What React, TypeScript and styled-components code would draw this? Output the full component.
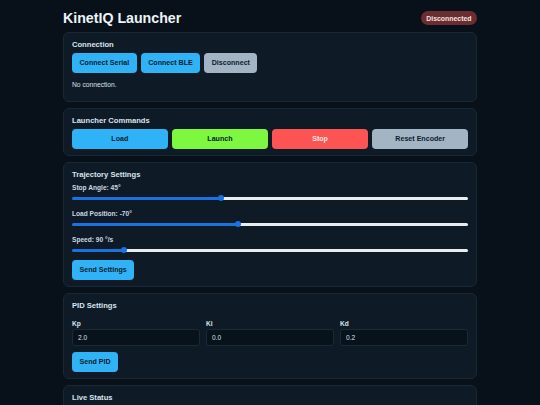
import React, { useState } from 'react';
import styled, { createGlobalStyle } from 'styled-components';

const GlobalStyle = createGlobalStyle`
  html, body {
    margin: 0;
    padding: 0;
    background: #08111a;
    color: #d6e0ea;
    font-family: "Liberation Sans", Arial, sans-serif;
  }
  * { box-sizing: border-box; }
`;

const Page = styled.div`
  width: 414px;
  margin: 0 auto;
  padding: 8px 0 20px;
`;

const Header = styled.header`
  display: flex;
  align-items: center;
  justify-content: space-between;
  height: 20px;
  margin-bottom: 4px;
`;

const Title = styled.h1`
  margin: 0;
  font-size: 14.2px;
  line-height: 20px;
  font-weight: 700;
  color: #eef3f8;
`;

const Badge = styled.span<{ $online: boolean }>`
  display: inline-flex;
  align-items: center;
  height: 14px;
  padding: 0 5.5px;
  border-radius: 7px;
  font-size: 6.9px;
  font-weight: 700;
  color: #f3e4e4;
  background: ${({ $online }) => ($online ? '#2b6b3c' : '#6b2d2f')};
`;

const Card = styled.section`
  background: #0e1b27;
  border: 1px solid #192835;
  border-radius: 6px;
  padding: 6px 8px;
  margin-bottom: 6px;
  font-size: 7px;
  line-height: 9px;
`;

const CardTitle = styled.h2`
  margin: 1px 0 3px;
  font-size: 7.6px;
  line-height: 10px;
  font-weight: 700;
  color: #d9e3ed;
`;

const ButtonRow = styled.div`
  display: flex;
  gap: 4px;
`;

const CommandGrid = styled.div`
  display: grid;
  grid-template-columns: repeat(4, 1fr);
  gap: 4.5px;
`;

const tones = {
  blue: '#2fb2f6',
  green: '#7df73f',
  red: '#fb5452',
  grey: '#a3b4c4',
};

const Button = styled.button<{ $tone: keyof typeof tones }>`
  display: block;
  height: 20px;
  padding: 0 7.5px;
  border: none;
  border-radius: 4px;
  background: ${({ $tone }) => tones[$tone]};
  color: ${({ $tone }) => ($tone === 'red' ? '#fde9e9' : '#0c1c2c')};
  font-family: inherit;
  font-size: 7.1px;
  font-weight: 700;
  cursor: pointer;
`;

const StatusText = styled.p`
  margin: 7px 0 6px;
  font-size: 6.7px;
  line-height: 9px;
  color: #d6e0ea;
`;

const Field = styled.div`
  margin-bottom: 7px;

  &:last-of-type {
    margin-bottom: 6px;
  }
`;

const FieldLabel = styled.label`
  display: block;
  padding-top: 1px;
  margin-bottom: 2px;
  font-size: 6.6px;
  line-height: 8px;
  font-weight: 700;
  color: #ccd7e2;
`;

const Range = styled.input`
  display: block;
  width: 100%;
  height: 8px;
  margin: 0;
  -webkit-appearance: none;
  appearance: none;
  background: transparent;

  &::-webkit-slider-runnable-track {
    height: 3px;
    border-radius: 2px;
    background: var(--track);
  }

  &::-webkit-slider-thumb {
    -webkit-appearance: none;
    width: 6px;
    height: 6px;
    margin-top: -1.5px;
    border-radius: 50%;
    background: #1a72de;
    border: none;
  }
`;

const PidGrid = styled.div`
  display: grid;
  grid-template-columns: repeat(3, 1fr);
  gap: 6px;
  margin: 9px 0 6px;
`;

const PidLabel = styled.label`
  display: block;
  margin-bottom: 1px;
  font-size: 6.6px;
  line-height: 8px;
  font-weight: 700;
  color: #dbe4ee;
`;

const TextInput = styled.input`
  display: block;
  width: 100%;
  height: 17px;
  padding: 0 5px;
  border: 1px solid #1b2a37;
  border-radius: 3px;
  background: #08121b;
  color: #d6e0ea;
  font-family: inherit;
  font-size: 6.6px;
  outline: none;
`;

const StatusBody = styled.div`
  height: 40px;
`;

type SliderProps = {
  label: string;
  unit: string;
  min: number;
  max: number;
  value: number;
  onChange: (v: number) => void;
};

const Slider = ({ label, unit, min, max, value, onChange }: SliderProps) => {
  const pct = ((value - min) / (max - min)) * 100;
  return (
    <Field>
      <FieldLabel>
        {label}: {value}
        {unit}
      </FieldLabel>
      <Range
        type="range"
        min={min}
        max={max}
        value={value}
        onChange={(e) => onChange(Number(e.target.value))}
        style={{
          ['--track' as string]: `linear-gradient(to right, #1a72de ${pct}%, #e9edf1 ${pct}%)`,
        }}
      />
    </Field>
  );
};

const App = () => {
  const [stopAngle, setStopAngle] = useState(45);
  const [loadPos, setLoadPos] = useState(-70);
  const [speed, setSpeed] = useState(90);
  const [kp, setKp] = useState('2.0');
  const [ki, setKi] = useState('0.0');
  const [kd, setKd] = useState('0.2');

  return (
    <>
      <GlobalStyle />
      <Page>
        <Header>
          <Title>KinetIQ Launcher</Title>
          <Badge $online={false}>Disconnected</Badge>
        </Header>

        <Card>
          <CardTitle>Connection</CardTitle>
          <ButtonRow>
            <Button $tone="blue">Connect Serial</Button>
            <Button $tone="blue">Connect BLE</Button>
            <Button $tone="grey">Disconnect</Button>
          </ButtonRow>
          <StatusText>No connection.</StatusText>
        </Card>

        <Card>
          <CardTitle>Launcher Commands</CardTitle>
          <CommandGrid>
            <Button $tone="blue">Load</Button>
            <Button $tone="green">Launch</Button>
            <Button $tone="red">Stop</Button>
            <Button $tone="grey">Reset Encoder</Button>
          </CommandGrid>
        </Card>

        <Card>
          <CardTitle>Trajectory Settings</CardTitle>
          <Slider label="Stop Angle" unit="°" min={0} max={120} value={stopAngle} onChange={setStopAngle} />
          <Slider label="Load Position" unit="°" min={-120} max={0} value={loadPos} onChange={setLoadPos} />
          <Slider label="Speed" unit=" °/s" min={0} max={720} value={speed} onChange={setSpeed} />
          <Button $tone="blue">Send Settings</Button>
        </Card>

        <Card>
          <CardTitle>PID Settings</CardTitle>
          <PidGrid>
            <div>
              <PidLabel>Kp</PidLabel>
              <TextInput value={kp} onChange={(e) => setKp(e.target.value)} />
            </div>
            <div>
              <PidLabel>Ki</PidLabel>
              <TextInput value={ki} onChange={(e) => setKi(e.target.value)} />
            </div>
            <div>
              <PidLabel>Kd</PidLabel>
              <TextInput value={kd} onChange={(e) => setKd(e.target.value)} />
            </div>
          </PidGrid>
          <Button $tone="blue">Send PID</Button>
        </Card>

        <Card>
          <CardTitle>Live Status</CardTitle>
          <StatusBody />
        </Card>
      </Page>
    </>
  );
};

export default App;
